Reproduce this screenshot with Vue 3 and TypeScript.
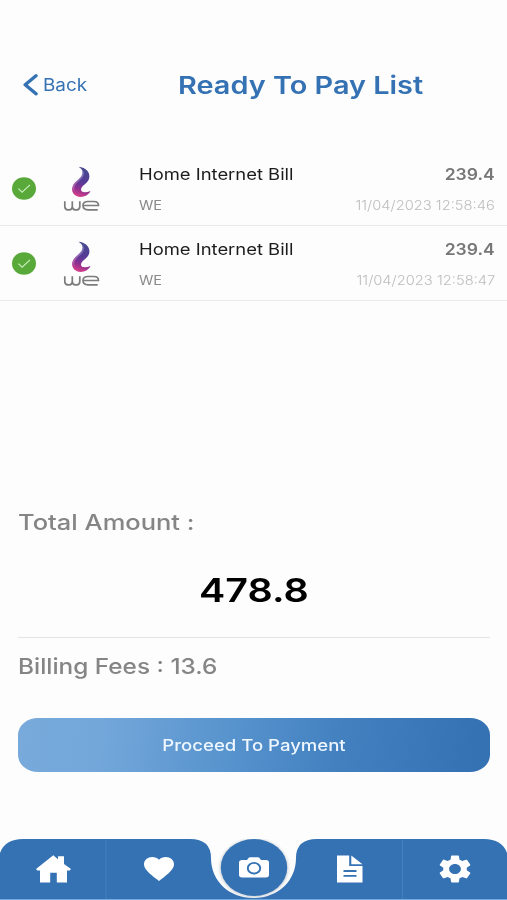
<script setup lang="ts">
interface Bill {
  id: number
  title: string
  provider: string
  amount: string
  date: string
}

const bills: Bill[] = [
  { id: 1, title: 'Home Internet Bill', provider: 'WE', amount: '239.4', date: '11/04/2023 12:58:46' },
  { id: 2, title: 'Home Internet Bill', provider: 'WE', amount: '239.4', date: '11/04/2023 12:58:47' },
]
const total = '478.8'
const fees = '13.6'
</script>

<template>
  <main class="screen">
    <header class="header">
      <button class="back" type="button">
        <svg class="chevron" width="16" height="24" viewBox="0 0 16 24">
          <path d="M14 2.800 3.200 11.800l10.800 9" fill="none" stroke="#3472b4" stroke-width="3.400" stroke-linecap="round" stroke-linejoin="round" />
        </svg>
        <span class="wide back-label">Back</span>
      </button>
      <h1 class="wide title">Ready To Pay List</h1>
    </header>

    <ul class="bills">
      <li v-for="bill in bills" :key="bill.id" class="bill">
        <svg class="check" width="24" height="23" viewBox="0 0 24 23">
          <ellipse cx="12" cy="11.500" rx="12" ry="11.300" fill="#58a83a" />
          <path d="m6.400 11.600 3.700 3.500 7.900-7.200" fill="none" stroke="#c9efbc" stroke-width="1.200" />
        </svg>
        <svg class="logo" width="38" height="46" viewBox="0 0 38 46">
          <defs>
            <linearGradient :id="`flame-${bill.id}`" x1="0.600" y1="0" x2="0.400" y2="1">
              <stop offset="0" stop-color="#454a8e" />
              <stop offset="0.500" stop-color="#583a98" />
              <stop offset="0.750" stop-color="#8f3090" />
              <stop offset="1" stop-color="#d84088" />
            </linearGradient>
            <linearGradient :id="`shine-${bill.id}`" x1="0" y1="1" x2="1" y2="0">
              <stop offset="0" stop-color="#c964ae" />
              <stop offset="1" stop-color="#7584c4" />
            </linearGradient>
          </defs>
          <path d="M15.500.8C23 1.300 28 7 26 13c-1.500 4.500-7.500 6.500-8 10.300-.4 3.200 4.500 3.700 9.500 1.700-2.500 5.500-9.500 7.200-14 5-5-2.300-5.500-8-2.500-12 3.200-4.200 8.700-6.300 8.700-11.500 0-2.500-1.700-4.200-4.200-5.700Z" :fill="`url(#flame-${bill.id})`" />
          <path d="M19 3.300c3.500 3.200 2 7.700-2.300 11.200-4 3.200-7 7-4.700 11.500C8.200 21.500 10 18 13.500 15c4-3.400 7.300-6.500 5.500-11.700Z" :fill="`url(#shine-${bill.id})`" opacity="0.750" />
          <path d="M1.800 35.200v5.300q0 3.300 3.200 3.300h1.300q3 0 3-3.300v-5.300m0 5.300q0 3.300 3.200 3.300h1.300q3 0 3-3.300v-5.300M20 39.500h15.500q0-4-4.500-4h-6q-5 0-5 4t5 4.300h9.700" fill="none" stroke="#7c7c7c" stroke-width="1.700" />
        </svg>
        <div class="info">
          <span class="wide bill-title">{{ bill.title }}</span>
          <span class="wide provider">{{ bill.provider }}</span>
        </div>
        <div class="figures">
          <span class="wide amount">{{ bill.amount }}</span>
          <span class="wide date">{{ bill.date }}</span>
        </div>
      </li>
    </ul>

    <section class="summary">
      <p class="wide total-label">Total Amount :</p>
      <p class="total"><span class="wide total-value">{{ total }}</span></p>
      <p class="fees"><span class="wide fees-label">Billing Fees : {{ fees }}</span></p>
      <button class="pay" type="button"><span class="wide pay-label">Proceed To Payment</span></button>
    </section>

    <nav class="tabs">
      <svg class="tabs-shape" width="507" height="61" viewBox="0 0 507 61">
        <defs>
          <filter id="soft" x="-20%" y="-20%" width="140%" height="140%">
            <feGaussianBlur stdDeviation="1.500" />
          </filter>
        </defs>
        <path d="M0 14Q5 0 23 0H190Q211 0 211 19C211 42 229 59 253.500 59S296 42 296 19Q296 0 317 0H484Q502 0 507 14V60H0Z" fill="#3472b4" />
        <path d="M0 60.500H507" stroke="#74ace2" />
        <path d="M106 1V60M402.500 1V60" stroke="#4580bd" />
        <ellipse cx="254" cy="29" rx="34" ry="29" fill="#9aa5b3" opacity="0.600" filter="url(#soft)" />
        <ellipse cx="254" cy="28.500" rx="33.200" ry="28.500" fill="#3472b4" />
      </svg>
      <a class="tab">
        <svg width="35" height="28" viewBox="0 0 35 28" fill="#fff">
          <path d="M0 14 17.300.3l4.700 3.900V1.300h6v7.600L35 14l-1.300 1.500H31V27.500H20.800V17.700h-6.600v9.800H4V15.500H1.300Z" />
        </svg>
      </a>
      <a class="tab">
        <svg width="30" height="24" viewBox="2 3 20 18.350" preserveAspectRatio="none" fill="#fff">
          <path d="m12 21.350-1.450-1.320C5.400 15.360 2 12.280 2 8.500 2 5.420 4.420 3 7.500 3c1.740 0 3.410.81 4.500 2.090C13.090 3.810 14.760 3 16.500 3 19.580 3 22 5.420 22 8.500c0 3.780-3.400 6.860-8.550 11.540Z" />
        </svg>
      </a>
      <a class="tab camera">
        <svg width="30" height="21" viewBox="0 0 30 21">
          <path d="M3 3H8L9.700.8Q10.200.2 11 .2h8q.8 0 1.300.6L22 3h5q3 0 3 2.700v12.100q0 2.700-3 2.700H3q-3 0-3-2.700V5.700Q0 3 3 3Z" fill="#fff" />
          <ellipse cx="15" cy="11.200" rx="6.200" ry="5.300" fill="none" stroke="#3472b4" stroke-width="1.900" />
        </svg>
      </a>
      <a class="tab document">
        <svg width="26" height="28" viewBox="0 0 26 28">
          <path d="M0 .5H12.200V11H25.500V27.500H0ZM14.300.5 25.500 9.300H14.300Z" fill="#fff" />
          <path d="M6.500 16H19.500M6.500 20.900H19.500" stroke="#3472b4" stroke-width="1.900" />
        </svg>
      </a>
      <a class="tab">
        <svg width="32" height="28" viewBox="2.250 2 19.500 20" preserveAspectRatio="none" fill="#fff">
          <path d="M19.140 12.940c.04-.3.060-.61.060-.94 0-.32-.02-.64-.07-.94l2.030-1.580c.18-.14.230-.41.120-.61l-1.920-3.320c-.12-.22-.37-.29-.59-.22l-2.390.96c-.5-.38-1.030-.7-1.620-.94l-.36-2.540c-.04-.24-.24-.41-.48-.41h-3.840c-.24 0-.43.17-.47.41l-.36 2.540c-.59.24-1.130.57-1.620.94l-2.390-.96c-.22-.08-.47 0-.59.22L2.740 8.870c-.12.21-.08.47.12.61l2.030 1.580c-.05.3-.09.63-.09.94s.02.64.07.94l-2.030 1.580c-.18.14-.23.41-.12.61l1.920 3.320c.12.22.37.29.59.22l2.390-.96c.5.38 1.030.7 1.620.94l.36 2.540c.05.24.24.41.48.41h3.840c.24 0 .44-.17.47-.41l.36-2.540c.59-.24 1.130-.56 1.620-.94l2.390.96c.22.08.47 0 .59-.22l1.920-3.320c.12-.22.07-.47-.12-.61l-2.010-1.580ZM12 15.600c-1.980 0-3.600-1.620-3.600-3.600s1.620-3.600 3.600-3.600 3.600 1.620 3.600 3.600-1.620 3.600-3.600 3.600Z" />
        </svg>
      </a>
    </nav>
  </main>
</template>

<style>
body {
  background: #fdfdfd;
}
</style>

<style scoped>
* {
  box-sizing: border-box;
}

.screen {
  display: flex;
  flex-direction: column;
  width: 507px;
  height: 900px;
  overflow: hidden;
  background: #fdfdfd;
  font-family: Inter, "Liberation Sans", sans-serif;
}

h1, p, ul {
  margin: 0;
  padding: 0;
}

button {
  border: 0;
  padding: 0;
  background: none;
  font: inherit;
}

.wide {
  display: inline-block;
  white-space: nowrap;
  transform-origin: left center;
}

.header {
  display: flex;
  align-items: center;
  height: 151px;
  padding: 19px 0 0 22px;
}

.back {
  display: flex;
  align-items: center;
  width: 156px;
  color: #3472b4;
}

.back-label {
  margin-left: 5px;
  font-size: 17px;
  transform: scaleX(1.110);
}

.title {
  color: #3472b4;
  font-size: 24.500px;
  font-weight: 630;
  transform: scaleX(1.178);
}

.bills {
  list-style: none;
}

.bill {
  display: flex;
  height: 75px;
  padding: 0 12px;
  border-bottom: 1.500px solid #e9e9eb;
}

.check {
  margin-top: 26px;
}

.logo {
  margin: 15px 0 0 27px;
}

.info,
.figures {
  display: flex;
  flex-direction: column;
  align-items: flex-start;
  gap: 11px;
  padding-top: 13px;
}

.info {
  margin-left: 38px;
}

.figures {
  align-items: flex-end;
  margin-left: auto;
}

.figures .wide {
  transform-origin: right center;
}

.bill-title,
.amount {
  font-size: 16px;
  line-height: 20px;
}

.bill-title {
  color: #1c1c1c;
  transform: scaleX(1.150);
}

.provider,
.date {
  font-size: 13.500px;
  line-height: 20px;
}

.provider {
  color: #8a8a8a;
  transform: scaleX(1.080);
}

.amount {
  color: #777;
  font-weight: 600;
  transform: scaleX(1.095);
}

.date {
  color: #bdbdbf;
  font-weight: 300;
  transform: scaleX(1.090);
}

.summary {
  padding: 208px 17.500px 0 18px;
}

.total-label,
.fees-label {
  display: block;
  color: #858585;
  font-size: 21.500px;
  font-weight: 450;
  line-height: 26px;
}

.total-label {
  transform: scaleX(1.186);
}

.fees-label {
  transform: scaleX(1.133);
}

.total {
  height: 103px;
  padding-top: 35px;
  border-bottom: 1px solid #e4e4e6;
  text-align: center;
}

.total-value {
  color: #000;
  font-size: 33px;
  font-weight: 600;
  line-height: 40px;
  transform: scaleX(1.195);
  transform-origin: center;
}

.fees {
  padding-top: 15px;
}

.pay {
  display: flex;
  align-items: center;
  justify-content: center;
  width: 472px;
  height: 54px;
  margin-top: 39px;
  border-radius: 20px / 17px;
  background: linear-gradient(100deg, #78aadb 0%, #73a7da 18%, #5793cd 45%, #4280c0 68%, #3472b4 96%);
}

.pay-label {
  color: #eef6ff;
  font-size: 16px;
  font-weight: 500;
  transform: scaleX(1.160);
  transform-origin: center;
}

.tabs {
  display: grid;
  grid-template-columns: 106px 106px 84px 106px 105px;
  position: relative;
  height: 61px;
  margin-top: auto;
}

.tabs-shape {
  position: absolute;
  inset: 0;
}

.tab {
  display: flex;
  align-items: center;
  justify-content: center;
  position: relative;
  padding-bottom: 1px;
}

.camera {
  padding-bottom: 4px;
}

.document {
  padding-left: 1px;
}
</style>
